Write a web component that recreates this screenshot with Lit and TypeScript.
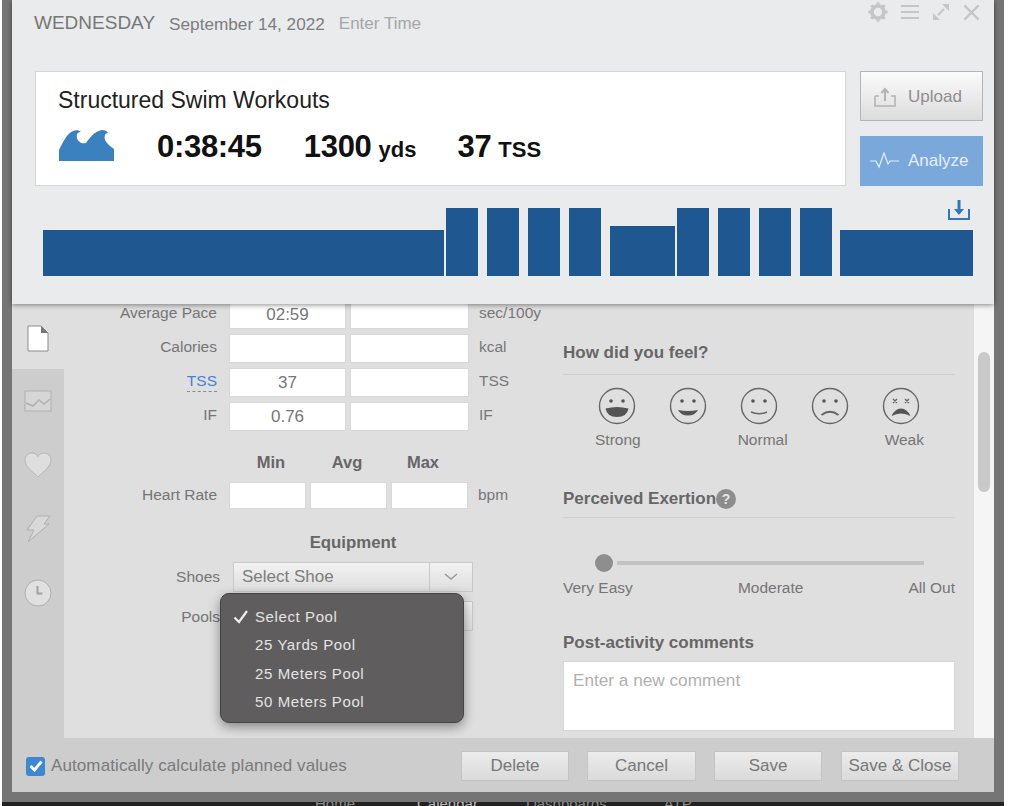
import { LitElement, html, css, svg } from 'lit';
import { customElement } from 'lit/decorators.js';

const BARS = [
  { gap: 0, w: 401, h: 46 },
  { gap: 2, w: 32, h: 68 },
  { gap: 9, w: 32, h: 68 },
  { gap: 9, w: 32, h: 68 },
  { gap: 9, w: 32, h: 68 },
  { gap: 9, w: 65, h: 50 },
  { gap: 2, w: 32, h: 68 },
  { gap: 9, w: 32, h: 68 },
  { gap: 9, w: 32, h: 68 },
  { gap: 9, w: 32, h: 68 },
  { gap: 8, w: 133, h: 46 },
];

const MOUTHS = [
  svg`<path d="M-11.5 2.5 Q0 -0.5 11.5 2.5 Q10 11 0 11 Q-10 11 -11.5 2.5Z" fill="#555"/>`,
  svg`<path d="M-10 4 Q0 6 10 4 Q7 9.5 0 9.5 Q-7 9.5 -10 4Z" fill="#555"/>`,
  svg`<path d="M-8 6 Q0 9.5 8 6" fill="none" stroke="#666" stroke-width="1.4"/>`,
  svg`<path d="M-8.5 9 Q0 2.5 8.5 9" fill="none" stroke="#666" stroke-width="2"/>`,
  svg`<path d="M-9.5 10 Q-6 2.5 0 2.5 Q6 2.5 9.5 10 Q5 7.5 0 7.5 Q-5 7.5 -9.5 10Z" fill="#555"/>`,
];

@customElement('app-root')
export class AppRoot extends LitElement {
  static styles = css`
    :host {
      display: block;
      position: relative;
      width: 1024px;
      height: 806px;
      overflow: hidden;
      background: #fff;
      font-family: "Liberation Sans", Arial, sans-serif;
      color: #6e6e6e;
    }
    .backdrop {
      width: 1002px;
      height: 802px;
      margin-left: 2px;
      padding: 0 10px;
      box-sizing: border-box;
      background: #757575;
    }
    .strip {
      height: 4px;
      margin-left: 2px;
      width: 1002px;
      overflow: hidden;
      background: #222;
      color: #8a8a8a;
      font-size: 15px;
      line-height: 4px;
      display: flex;
      padding-left: 313px;
      box-sizing: border-box;
    }
    .strip span:nth-child(2) { margin-left: 62px; color: #bbb; }
    .strip span:nth-child(3) { margin-left: 48px; }
    .strip span:nth-child(4) { margin-left: 57px; }
    .modal {
      width: 982px;
      height: 792px;
      display: flex;
      flex-direction: column;
    }

    /* top panel */
    .head {
      position: relative;
      z-index: 1;
      height: 304px;
      flex: none;
      box-sizing: border-box;
      background: #e9ebed;
      box-shadow: 0 1px 5px rgba(0, 0, 0, 0.45);
      padding: 0 11px 0 22px;
    }
    .title-row {
      height: 71px;
      display: flex;
      align-items: flex-start;
      color: #7d7d7d;
    }
    .day {
      font-size: 19px;
      line-height: 24px;
      margin-top: 11px;
      color: #777;
    }
    .date {
      font-size: 17.2px;
      line-height: 24px;
      margin: 12px 0 0 14px;
      color: #7d7d7d;
    }
    .time {
      font-size: 17px;
      line-height: 24px;
      margin: 12px 0 0 14px;
      color: #a6a6a6;
    }
    .tools {
      margin-left: auto;
      display: flex;
      gap: 13px;
      align-items: center;
      margin-top: 2px;
      padding-right: 3px;
    }
    .tools svg { display: block; }
    .summary-row {
      display: flex;
      height: 115px;
      padding-left: 1px;
    }
    .summary {
      width: 811px;
      box-sizing: border-box;
      background: #fff;
      border: 1px solid #d5d5d5;
      padding: 14px 22px 0;
      color: #111;
    }
    .workout {
      font-size: 23px;
      line-height: 28px;
      color: #222;
    }
    .stats {
      display: flex;
      align-items: center;
      margin-top: 11px;
      height: 44px;
      font-weight: bold;
    }
    .stats svg { margin: -3px 43px 0 1px; }
    .big { font-size: 31px; letter-spacing: -0.3px; }
    .small { font-size: 22px; margin-left: 7px; }
    .stat { margin-right: 41px; white-space: nowrap; }
    .stat.time-stat { margin-right: 42px; }
    .actions {
      margin-left: 14px;
      display: flex;
      flex-direction: column;
      justify-content: space-between;
      width: 123px;
    }
    .action {
      height: 50px;
      box-sizing: border-box;
      display: flex;
      align-items: center;
      gap: 12px;
      padding-left: 13px;
      font-size: 17px;
    }
    .upload {
      border: 1px solid #b5b5b5;
      background: linear-gradient(#fbfbfb, #dcdcdc);
      color: #8f8f8f;
      padding-top: 2px;
    }
    .analyze {
      background: #7ba8da;
      color: #e6eef8;
      padding-left: 10px;
      gap: 9px;
    }
    .chart-area {
      position: relative;
      display: flex;
      align-items: flex-end;
      height: 90px;
      margin-left: 9px;
    }
    .bar { background: #1f5791; flex: none; }
    .download {
      position: absolute;
      left: 905px;
      top: 13px;
    }

    /* middle part */
    .body {
      flex: 1;
      min-height: 0;
      display: flex;
      background: #e0dfe0;
      overflow: hidden;
    }
    .rail {
      width: 52px;
      flex: none;
      display: flex;
      flex-direction: column;
      background: #cdcdcd;
    }
    .rail-item {
      height: 64px;
      flex: none;
      display: flex;
      align-items: center;
      justify-content: center;
    }
    .rail-item.on {
      height: 65px;
      background: #e0dfe0;
      align-items: flex-start;
      padding-top: 21px;
      box-sizing: border-box;
    }
    .rail-item svg { display: block; }
    .form {
      width: 499px;
      flex: none;
      margin-top: -4px;
      font-size: 15.5px;
    }
    .row {
      display: flex;
      align-items: center;
      height: 29px;
      margin-bottom: 5px;
    }
    .label {
      width: 153px;
      text-align: right;
      flex: none;
      color: #757575;
      padding-bottom: 3px;
      box-sizing: content-box;
    }
    .label.link {
      color: #3f84cc;
    }
    .label.link span {
      border-bottom: 1px dashed #8a8a8a;
      padding-bottom: 2px;
    }
    .field {
      height: 29px;
      background: #fff;
      box-sizing: border-box;
      border: 1px solid #d8d8d8;
      margin-left: 12px;
      width: 117px;
      flex: none;
      text-align: center;
      font-size: 17px;
      line-height: 27px;
      color: #777;
    }
    .field + .field { margin-left: 4px; width: 119px; }
    .unit { margin-left: 10px; color: #777; padding-bottom: 3px; white-space: nowrap; }
    .cols {
      display: flex;
      margin: 20px 0 0 169px;
      height: 22px;
      font-weight: bold;
      font-size: 16.5px;
      line-height: 22px;
      color: #666;
    }
    .cols div { width: 76px; text-align: center; }
    .hr { height: 27px; margin: 9px 0 0; }
    .hr .field,
    .hr .field + .field { width: 77px; height: 27px; margin-left: 4px; }
    .hr .label + .field { margin-left: 12px; }
    .hr .label, .hr .unit { padding-bottom: 1px; }
    .equip {
      margin: 22px 0 0 165px;
      width: 248px;
      text-align: center;
      font-weight: bold;
      font-size: 16.8px;
      line-height: 24px;
      color: #666;
    }
    .select-row {
      display: flex;
      align-items: center;
      height: 30px;
      margin-top: 9px;
    }
    .equip + .select-row { margin-top: 7px; }
    .select-row .label { width: 156px; padding-bottom: 0; }
    .select {
      margin-left: 13px;
      width: 240px;
      height: 30px;
      box-sizing: border-box;
      display: flex;
      align-items: center;
      border: 1px solid #c9c9c9;
      background: linear-gradient(#f2f2f2, #dedede);
      font-size: 17px;
      color: #7d7d7d;
    }
    .select .text { flex: 1; padding-left: 8px; }
    .select .arrow {
      width: 42px;
      height: 100%;
      border-left: 1px solid #c9c9c9;
      display: flex;
      align-items: center;
      justify-content: center;
    }
    .pools { position: relative; }
    .pools .label { padding-top: 2px; }
    .menu {
      position: absolute;
      left: 156px;
      top: -8px;
      width: 244px;
      height: 130px;
      box-sizing: border-box;
      padding: 9px 0 0 34px;
      background: #5f5d5e;
      border: 1px solid #444;
      border-radius: 9px;
      box-shadow: 0 4px 12px rgba(0, 0, 0, 0.4);
      color: #e4e4e4;
      font-size: 15px;
      letter-spacing: 0.6px;
      line-height: 28.4px;
    }
    .menu-check {
      position: absolute;
      left: 12px;
      top: 16px;
    }

    .right {
      flex: 1;
      min-width: 0;
      padding: 36px 19px 0 0;
    }
    h3 {
      margin: 0;
      font-size: 17px;
      line-height: 26px;
      font-weight: bold;
      color: #666;
      display: flex;
      align-items: center;
    }
    .rule {
      border-bottom: 1px solid #d0d0d0;
    }
    .feel h3 { height: 34px; align-items: flex-start; }
    .faces {
      display: flex;
      justify-content: flex-start;
      padding: 12px 0 0 35px;
      gap: 33px;
    }
    .face {
      width: 38px;
      display: block;
    }
    .face-labels {
      position: relative;
      display: flex;
      height: 22px;
      font-size: 15.5px;
      line-height: 22px;
      margin-top: 4px;
      color: #757575;
    }
    .face-labels span:nth-child(1) { margin-left: 32px; }
    .face-labels span:nth-child(2) { margin-left: 97px; }
    .face-labels span:nth-child(3) { margin-left: 97px; }
    .help {
      width: 20px;
      height: 20px;
      border-radius: 50%;
      background: #8d8d8d;
      color: #e6e6e6;
      font-size: 14px;
      font-weight: bold;
      line-height: 20px;
      text-align: center;
      flex: none;
    }
    .exertion { margin-top: 32px; height: 34px; }
    .exertion h3 { height: 32px; align-items: center; }
    .slider {
      display: flex;
      align-items: center;
      margin: 35px 31px 0 32px;
      height: 20px;
    }
    .thumb {
      width: 18px;
      height: 18px;
      border-radius: 50%;
      background: #8e8e8e;
      flex: none;
    }
    .track {
      flex: 1;
      height: 4px;
      margin-left: 4px;
      background: #c2c2c2;
    }
    .scale {
      display: flex;
      justify-content: space-between;
      font-size: 15.5px;
      line-height: 22px;
      margin-top: 4px;
      color: #757575;
    }
    .post { margin-top: 31px; }
    .post h3 { height: 26px; }
    .comment {
      margin-top: 5px;
      height: 70px;
      box-sizing: border-box;
      background: #fff;
      border: 1px solid #d8d8d8;
      padding: 8px 9px;
      font-size: 17.2px;
      color: #b0b0b0;
    }
    .scroll {
      width: 20px;
      flex: none;
      background: #f5f5f5;
      padding: 48px 4px 0;
      box-sizing: border-box;
    }
    .thumb-v {
      width: 12px;
      height: 140px;
      border-radius: 6px;
      background: #c9c9c9;
    }

    /* footer */
    .foot {
      height: 54px;
      flex: none;
      box-sizing: border-box;
      background: #cdcdcd;
      display: flex;
      align-items: center;
      padding: 2px 35px 0 14px;
    }
    .check {
      width: 19px;
      height: 19px;
      background: #3d88d0;
      border-radius: 3px;
      display: flex;
      align-items: center;
      justify-content: center;
      flex: none;
    }
    .check-text {
      margin-left: 6px;
      font-size: 17px;
      letter-spacing: 0.1px;
      color: #7a7a7a;
    }
    .btns { margin-left: auto; display: flex; gap: 18px; }
    .btn {
      height: 30px;
      box-sizing: border-box;
      border: 1px solid #c4c4c4;
      background: linear-gradient(#ececec, #dadada);
      color: #777;
      font-size: 17px;
      line-height: 28px;
      text-align: center;
    }
    .w108 { width: 108px; }
    .w109 { width: 109px; }
    .w118 { width: 118px; margin-left: 1px; }
  `;

  private face(eyes: 'dot' | 'x', mouth: number) {
    return html`<svg class="face" width="38" height="38" viewBox="-19 -19 38 38">
      <circle r="17.5" fill="none" stroke="#666" stroke-width="1.4"></circle>
      ${eyes === 'dot'
        ? svg`<circle cx="-6" cy="-5" r="1.8" fill="#555"></circle><circle cx="6" cy="-5" r="1.8" fill="#555"></circle>`
        : svg`<path d="M-8 -7 l4 4 M-4 -7 l-4 4 M4 -7 l4 4 M8 -7 l-4 4" stroke="#666" stroke-width="1.4"></path>`}
      ${MOUTHS[mouth]}
    </svg>`;
  }

  private row(label: string, a: string, unit: string, link = false) {
    return html`<div class="row">
      <div class="label ${link ? 'link' : ''}">${link ? html`<span>${label}</span>` : label}</div>
      <div class="field">${a}</div>
      <div class="field"></div>
      <div class="unit">${unit}</div>
    </div>`;
  }

  render() {
    return html`
      <div class="backdrop">
        <div class="modal">
          <div class="head">
            <div class="title-row">
              <div class="day">WEDNESDAY</div>
              <div class="date">September 14, 2022</div>
              <div class="time">Enter Time</div>
              <div class="tools">
                <svg width="20" height="20" viewBox="0 0 20 20">
                  <circle cx="10" cy="10" r="6" fill="none" stroke="#c4c6c8" stroke-width="3.6"></circle>
                  <path d="M10 0.5v4M10 15.5v4M0.5 10h4M15.5 10h4M3.3 3.3l2.8 2.8M13.9 13.9l2.8 2.8M16.7 3.3l-2.8 2.8M6.1 13.9l-2.8 2.8" stroke="#c4c6c8" stroke-width="3"></path>
                </svg>
                <svg width="18" height="16" viewBox="0 0 18 16">
                  <path d="M0 2h18M0 8h18M0 14h18" stroke="#c4c6c8" stroke-width="2.2"></path>
                </svg>
                <svg width="18" height="18" viewBox="0 0 18 18">
                  <path d="M10 1h7v7zM1 10v7h7z" fill="#c4c6c8"></path>
                  <path d="M6 12l6-6" stroke="#c4c6c8" stroke-width="2"></path>
                </svg>
                <svg width="17" height="17" viewBox="0 0 18 18">
                  <path d="M1.5 1.5l15 15M16.5 1.5l-15 15" stroke="#c4c6c8" stroke-width="2.4"></path>
                </svg>
              </div>
            </div>
            <div class="summary-row">
              <div class="summary">
                <div class="workout">Structured Swim Workouts</div>
                <div class="stats">
                  <svg width="55" height="31" viewBox="0 0 55 31">
                    <path fill="#3b80bf" d="M0 31V20C3 14 8 3 14 1C17 0 20 0 22 2C19 2 17 4 18 8C19 12 23 14 27 13C30 9 35 1 43 0C46 0 48 1 49 3C46 3 45 6 46 10C48 14 52 17 55 19V31Z"></path>
                  </svg>
                  <span class="stat time-stat big">0:38:45</span>
                  <span class="stat"><span class="big">1300</span><span class="small">yds</span></span>
                  <span class="stat"><span class="big">37</span><span class="small">TSS</span></span>
                </div>
              </div>
              <div class="actions">
                <div class="action upload">
                  <svg width="22" height="20" viewBox="0 0 22 20" fill="none" stroke="#b4b4b4" stroke-width="1.6">
                    <path d="M1 9v10h20V9h-4M5 9H1"></path>
                    <path d="M11 14V2M7.5 6L11 2l3.5 4" stroke-width="2"></path>
                  </svg>
                  <span>Upload</span>
                </div>
                <div class="action analyze">
                  <svg width="29" height="18" viewBox="0 0 29 18" fill="none" stroke="#e6eef8" stroke-width="1.2">
                    <path d="M0 9h6l3 6 5-14 4 11 2-3h9"></path>
                  </svg>
                  <span>Analyze</span>
                </div>
              </div>
            </div>
            <div class="chart-area">
              ${BARS.map(
                (b) => html`<div class="bar" style="margin-left:${b.gap}px;width:${b.w}px;height:${b.h}px"></div>`
              )}
              <svg class="download" width="22" height="21" viewBox="0 0 22 21" fill="none" stroke="#2f78bd" stroke-width="2">
                <path d="M1 10v10h20V10"></path>
                <path d="M11 1v11" stroke-width="3"></path>
                <path d="M6 10h10l-5 6z" fill="#2f78bd" stroke="none"></path>
              </svg>
            </div>
          </div>

          <div class="body">
            <div class="rail">
              <div class="rail-item on">
                <svg width="22" height="27" viewBox="0 0 22 27">
                  <path d="M1 1h13l7 7v18H1z" fill="#fff" stroke="#8b8b8b"></path>
                  <path d="M14 1l7 7h-7z" fill="#777"></path>
                </svg>
              </div>
              <div class="rail-item">
                <svg width="28" height="22" viewBox="0 0 28 22">
                  <rect x="1" y="1" width="26" height="20" fill="#d6d6d6" stroke="#b0b0b0"></rect>
                  <path d="M2 13l7 3 6-6 5 4 6-5" fill="none" stroke="#b0b0b0" stroke-width="1.5"></path>
                </svg>
              </div>
              <div class="rail-item">
                <svg width="28" height="26" viewBox="0 0 28 26">
                  <path d="M14 25C9 20 1 15 1 8c0-4 3-7 7-7 3 0 5 1.5 6 3.5C15 2.5 17 1 20 1c4 0 7 3 7 7 0 7-8 12-13 17z" fill="#dedede" stroke="#b5b5b5"></path>
                </svg>
              </div>
              <div class="rail-item">
                <svg width="26" height="28" viewBox="0 0 26 28">
                  <path d="M12 1h13l-6 8h5L3 27l6-12H2z" fill="#d8d8d8" stroke="#b0b0b0"></path>
                </svg>
              </div>
              <div class="rail-item">
                <svg width="28" height="28" viewBox="0 0 28 28">
                  <circle cx="14" cy="14" r="13" fill="#e0e0e0" stroke="#b0b0b0"></circle>
                  <path d="M13.5 7v7.5h5" fill="none" stroke="#a0a0a0" stroke-width="2"></path>
                </svg>
              </div>
            </div>

            <div class="form">
              ${this.row('Average Pace', '02:59', 'sec/100y')}
              ${this.row('Calories', '', 'kcal')}
              ${this.row('TSS', '37', 'TSS', true)}
              ${this.row('IF', '0.76', 'IF')}
              <div class="cols"><div>Min</div><div>Avg</div><div>Max</div></div>
              <div class="row hr">
                <div class="label">Heart Rate</div>
                <div class="field"></div>
                <div class="field"></div>
                <div class="field"></div>
                <div class="unit">bpm</div>
              </div>
              <div class="equip">Equipment</div>
              <div class="select-row">
                <div class="label">Shoes</div>
                <div class="select">
                  <span class="text">Select Shoe</span>
                  <span class="arrow">
                    <svg width="14" height="8" viewBox="0 0 14 8" fill="none" stroke="#999" stroke-width="1.5"><path d="M1 1l6 5 6-5"></path></svg>
                  </span>
                </div>
              </div>
              <div class="select-row pools">
                <div class="label">Pools</div>
                <div class="select"></div>
                <div class="menu">
                  <svg class="menu-check" width="16" height="14" viewBox="0 0 16 14" fill="none" stroke="#eee" stroke-width="2.2"><path d="M1.5 7.5L6 12l8-11"></path></svg>
                  <div>Select Pool</div>
                  <div>25 Yards Pool</div>
                  <div>25 Meters Pool</div>
                  <div>50 Meters Pool</div>
                </div>
              </div>
            </div>

            <div class="right">
              <div class="feel rule">
                <h3>How did you feel?</h3>
              </div>
              <div class="faces">
                ${this.face('dot', 0)}${this.face('dot', 1)}${this.face('dot', 2)}${this.face('dot', 3)}${this.face('x', 4)}
              </div>
              <div class="face-labels"><span>Strong</span><span>Normal</span><span>Weak</span></div>
              <div class="exertion rule">
                <h3>Perceived Exertion<span class="help">?</span></h3>
              </div>
              <div class="slider"><div class="thumb"></div><div class="track"></div></div>
              <div class="scale"><span>Very Easy</span><span>Moderate</span><span>All Out</span></div>
              <div class="post">
                <h3>Post-activity comments</h3>
                <div class="comment">Enter a new comment</div>
              </div>
            </div>

            <div class="scroll"><div class="thumb-v"></div></div>
          </div>

          <div class="foot">
            <div class="check">
              <svg width="14" height="12" viewBox="0 0 14 12" fill="none" stroke="#fff" stroke-width="2.8"><path d="M1.5 6l4 4 7-8.5"></path></svg>
            </div>
            <div class="check-text">Automatically calculate planned values</div>
            <div class="btns">
              <div class="btn w108">Delete</div>
              <div class="btn w109">Cancel</div>
              <div class="btn w108">Save</div>
              <div class="btn w118">Save &amp; Close</div>
            </div>
          </div>
        </div>
      </div>
      <div class="strip"><span>Home</span><span>Calendar</span><span>Dashboards</span><span>ATP</span></div>
    `;
  }
}
